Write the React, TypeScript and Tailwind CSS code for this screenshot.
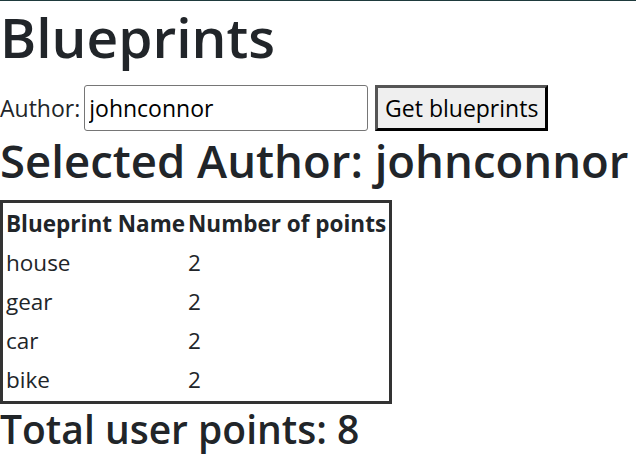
export default function App() {
  const rows = [
    { name: 'house', points: 2 },
    { name: 'gear', points: 2 },
    { name: 'car', points: 2 },
    { name: 'bike', points: 2 },
  ];
  const total = rows.reduce((s, r) => s + r.points, 0);

  return (
    <div className="min-h-screen border-t border-[#1e3a3c] bg-white font-['Open_Sans',sans-serif] text-[#212529]">
      <h1 className="h-[84px] text-[55px] leading-[72px] font-semibold">Blueprints</h1>
      <div className="flex h-[46px] items-center text-[23px]">
        <label htmlFor="author">Author:</label>
        <input
          id="author"
          defaultValue="johnconnor"
          className="ml-[4px] h-[46px] w-[284px] rounded-[3px] border border-[#767676] px-[4px] text-[23px] text-black"
        />
        <button className="ml-[7px] h-[46px] w-[173px] border-[3px] border-t-[#555] border-l-[#555] border-r-black border-b-black bg-[#efefef] text-[23px] text-black">
          Get blueprints
        </button>
      </div>
      <h2 className="h-[69px] text-[45.5px] leading-[58px] font-semibold">Selected Author: johnconnor</h2>
      <table className="border-separate border-spacing-[3px] border-[3px] border-[#333] text-[22.5px]">
        <thead>
          <tr className="h-[36px]">
            <th className="p-0 text-left font-bold">Blueprint Name</th>
            <th className="p-0 text-left font-bold">Number of points</th>
          </tr>
        </thead>
        <tbody>
          {rows.map((r) => (
            <tr key={r.name} className="h-[36px]">
              <td className="p-0">{r.name}</td>
              <td className="p-0">{r.points}</td>
            </tr>
          ))}
        </tbody>
      </table>
      <h3 className="text-[39px] leading-[50px] font-semibold">Total user points: {total}</h3>
    </div>
  );
}
